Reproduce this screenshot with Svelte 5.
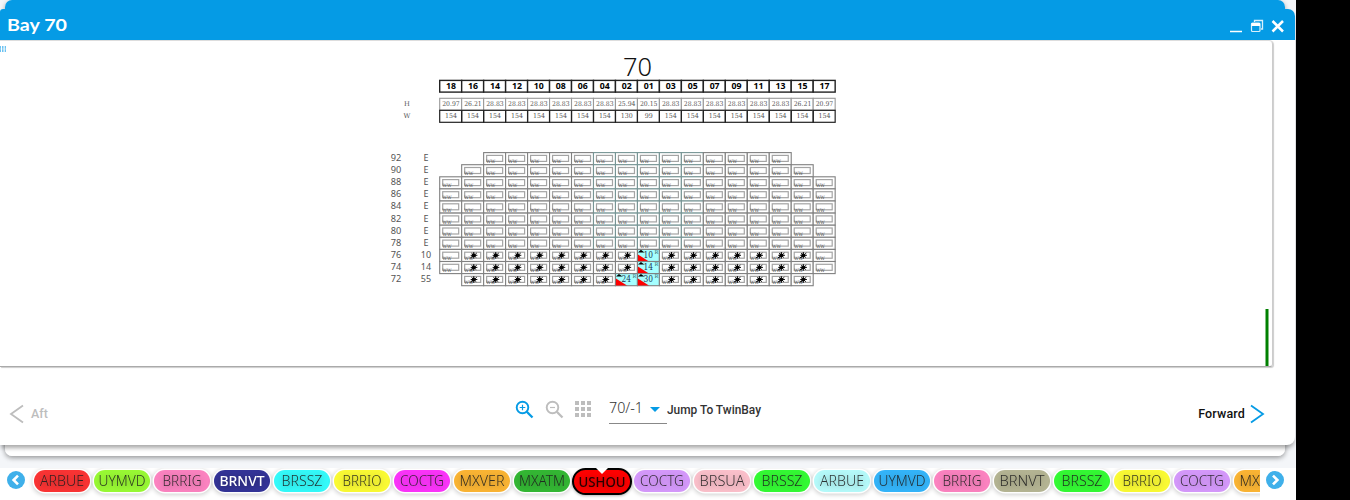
<script>
  const pitch = 21.97;
  const left = 439.7;
  const bays = ['18','16','14','12','10','08','06','04','02','01','03','05','07','09','11','13','15','17'];
  const heights = bays.map((b) => ({ 18: '20.97', 17: '20.97', 16: '26.21', 15: '26.21', '02': '25.94', '01': '20.15' })[b] ?? '28.83');
  const weights = bays.map((b) => ({ '02': '130', '01': '99' })[b] ?? '154');
  const tiers = [
    ['92', 'E', 2, 15], ['90', 'E', 1, 16], ['88', 'E', 0, 17], ['86', 'E', 0, 17],
    ['84', 'E', 0, 17], ['82', 'E', 0, 17], ['80', 'E', 0, 17], ['78', 'E', 0, 17],
    ['76', '10', 0, 17], ['74', '14', 0, 17], ['72', '55', 1, 16]
  ];
  const loaded = { '8-9': '10', '9-9': '14', '10-9': '30', '10-8': '24' };
  const cells = tiers.flatMap(([, , a, b], r) =>
    Array.from({ length: b - a + 1 }, (_, i) => {
      const c = a + i;
      return { x: left + c * pitch, y: 152.6 + r * 12.1, load: loaded[`${r}-${c}`], star: r > 7 && c > 0 && c < 17, tone: c > 6 && c < 12 && r < 8 };
    })
  );
  const ports = [
    ['ARBUE', '#fa3434', 44], ['UYMVD', '#99fa34', 47], ['BRRIG', '#fb83c0', 39], ['BRNVT', '#343498', 45, 'light'],
    ['BRSSZ', '#34fafa', 41], ['BRRIO', '#fafa34', 39], ['COCTG', '#fb34fa', 44], ['MXVER', '#fbb534', 45],
    ['MXATM', '#34b834', 46], ['USHOU', '#ff0000', 47, 'active'], ['COCTG', '#d599fb', 44], ['BRSUA', '#fbc0cb', 45],
    ['BRSSZ', '#34fa34', 41], ['ARBUE', '#b5fafa', 44], ['UYMVD', '#34b5fa', 47], ['BRRIG', '#fb83c0', 39],
    ['BRNVT', '#b5b594', 45], ['BRSSZ', '#34fa34', 41], ['BRRIO', '#fafa34', 39], ['COCTG', '#d599fb', 44], ['MXVER', '#fbb534', 45]
  ];
</script>

<div class="screen">
  <div class="app">
    <div class="stack">
      <div class="back"></div>
      <section class="window">
        <header>
          <h1><svg width="62" height="22"><text x="0" y="16" textLength="60" lengthAdjust="spacingAndGlyphs">Bay 70</text></svg></h1>
          <svg class="winbtns" width="60" height="18" fill="none" stroke="#fff">
            <path d="M2 14.5H14" stroke-width="1.4" />
            <path d="M26.5 5V3.5H34.5V12H33" stroke-width="1.3" stroke="#d9f0fc" />
            <rect x="23.5" y="6" width="8.5" height="8.5" rx="1" stroke-width="1.2" stroke="#d9f0fc" />
            <path d="M23.5 7.5H32" stroke-width="3" />
            <path d="M44.5 4L55 14.5M55 4L44.5 14.5" stroke-width="2.5" />
          </svg>
        </header>
        <div class="plan">
          <svg width="1272" height="325" viewBox="0 41 1272 325">
            <defs>
              <g id="slot">
                <rect x="3" y="2.8" width="16" height="6" fill="none" stroke="#a4a4a4" stroke-width="1.2" />
                <text class="ww" x="2.7" y="10.5" textLength="9" lengthAdjust="spacingAndGlyphs">WW</text>
              </g>
              <g id="star" stroke="#000">
                <path d="M8.7 8.6L12 5.8M9.8 3.8L14.6 8.1M15.1 3.6L10 8.2M12.1 2.6V9.2M9 5.9H15.7" stroke-width=".95" />
                <circle cx="12.1" cy="5.9" r="1.5" />
              </g>
            </defs>
            <g fill="#6cc2f1"><rect x="0" y="46" width="1" height="6" /><rect x="2" y="46" width="1.5" height="6" /><rect x="4.7" y="46" width="1.3" height="6" /></g>
            <path d="M0 49H6" stroke="#fff" stroke-width=".4" />
            <text class="title" x="623" y="76" textLength="29" lengthAdjust="spacingAndGlyphs">70</text>
            {#each bays as b, i}
              {@const x = left + i * pitch}
              <rect {x} y="80.4" width={pitch} height="11.7" class="head" />
              <text x={x + pitch / 2 + 0.3} y="89.2" class="num" textLength="10" lengthAdjust="spacingAndGlyphs">{b}</text>
              <rect {x} y="98.3" width={pitch} height="12" class="hbox" />
              <text x={x + pitch / 2 + 0.3} y="106.2" class="val" textLength="17.6" lengthAdjust="spacingAndGlyphs">{heights[i]}</text>
              <rect {x} y="110.3" width={pitch} height="12" class="wbox" />
              <text x={x + pitch / 2 + 0.4} y="118.2" class="val" textLength={weights[i].length * 4} lengthAdjust="spacingAndGlyphs">{weights[i]}</text>
            {/each}
            <text x="407" y="106" class="val">H</text>
            <text x="407" y="118" class="val">W</text>
            {#each tiers as t, r}
              <text x="396" y={161 + r * 12.1} class="tier" textLength="10.5" lengthAdjust="spacingAndGlyphs">{t[0]}</text>
              <text x="426" y={161 + r * 12.1} class="tier">{t[1]}</text>
            {/each}
            {#each cells as c}
              <g transform="translate({c.x} {c.y})">
                <rect width={pitch} height="12.1" fill={c.load ? '#a5ffff' : '#fff'} stroke={c.tone ? '#779595' : '#808080'} stroke-width="1.1" />
                {#if c.load}
                  <path d="M.5 5L11.5 12H.5Z" fill="#f00" />
                  <path d="M.5 3L3.5 .4L7 3Z" fill="#000" />
                  <text x="6" y="8.2" class="load" textLength="9.5" lengthAdjust="spacingAndGlyphs">{c.load}</text>
                  <text x="17" y="4.8" class="reefer">R</text>
                {:else}
                  <use href="#slot" />
                  {#if c.star}<use href="#star" />{/if}
                {/if}
              </g>
            {/each}
            <rect x="1265.5" y="309" width="3" height="57" fill="#008000" />
          </svg>
        </div>
        <footer>
          <div class="nav aft">
            <svg width="16" height="20" fill="none" stroke="#bdbdbd" stroke-width="1.8"><path d="M14 1.5L2 10L14 18.5" /></svg>
            <span>Aft</span>
          </div>
          <div class="tools">
            <svg width="20" height="20" fill="none" stroke="#059be5" stroke-width="1.9"><circle cx="7.5" cy="7.5" r="5.8" /><path d="M11.8 11.8L17.5 17.5" stroke-width="2.3" /><path d="M4.7 7.5H10.3M7.5 4.7V10.3" stroke-width="1.2" /></svg>
            <svg width="20" height="20" fill="none" stroke="#bdbdbd" stroke-width="1.9"><circle cx="7.5" cy="7.5" r="5.8" /><path d="M11.8 11.8L17.5 17.5" stroke-width="2.3" /><path d="M5 7.5H10" stroke-width="1.2" /></svg>
            <svg width="18" height="20" fill="#bdbdbd">
              {#each [0, 1, 2] as y}{#each [0, 1, 2] as x}<rect x={x * 6} y={1 + y * 6} width="4" height="4" />{/each}{/each}
            </svg>
            <div class="select">
              <svg width="38" height="22"><text x="0" y="14" textLength="34" lengthAdjust="spacingAndGlyphs">70/-1</text></svg>
              <i></i>
            </div>
            <svg class="jump" width="98" height="20"><text x="0" y="14" textLength="94" lengthAdjust="spacingAndGlyphs">Jump To TwinBay</text></svg>
          </div>
          <div class="nav fwd">
            <span>Forward</span>
            <svg width="16" height="20" fill="none" stroke="#059be5" stroke-width="1.8"><path d="M2 1.5L14 10L2 18.5" /></svg>
          </div>
        </footer>
      </section>
    </div>
    <div class="ports">
      <svg class="arrow" width="18" height="18"><circle cx="9" cy="9" r="9" fill="#3fb0ea" /><path d="M11 4.6L6.6 9L11 13.4" fill="none" stroke="#fff" stroke-width="2.6" /></svg>
      <div class="rail">
        {#each ports as [name, color, w, kind]}
          <div class="slot">
            <div class="chip {kind ?? ''}" style="background-color:{color}">
              <svg width="56" height="22"><text x="28" y={kind === 'active' ? 16.8 : 16.4} textLength={w} lengthAdjust="spacingAndGlyphs">{name}</text></svg>
              {#if kind === 'active'}<b></b>{/if}
            </div>
          </div>
        {/each}
      </div>
      <svg class="arrow right" width="18" height="18"><circle cx="9" cy="9" r="9" fill="#3fb0ea" /><path d="M7 4.6L11.4 9L7 13.4" fill="none" stroke="#fff" stroke-width="2.6" /></svg>
    </div>
  </div>
</div>

<style>
  :global(body) { margin: 0; overflow: hidden; }
  .screen { width: 1350px; height: 500px; background: #000; overflow: hidden; font-family: Roboto, sans-serif; }
  .app { width: 1296px; height: 500px; display: flex; flex-direction: column; background: #fff; overflow: hidden; }
  svg { display: block; flex: none; }
  .stack { height: 468px; flex: none; display: grid; background: #f4f6f9; }
  .back, .window { grid-area: 1 / 1; }
  .back { margin: 0 11px 12px 5px; border-radius: 7px; background: linear-gradient(#059be5 0 40px, #fff 40px); box-shadow: 0 2px 5px rgba(0, 0, 0, .38); }
  .window { z-index: 1; margin: 9px 1px 23px 0; border-radius: 3px 7px 8px 0; background: #fff; display: flex; flex-direction: column; overflow: hidden; box-shadow: 0 4px 4px -1px rgba(0, 0, 0, .34); }
  header { height: 31px; flex: none; background: #059be5; display: flex; justify-content: space-between; padding: 0 11px 0 7px; box-sizing: border-box; }
  h1 { margin: 6px 0 0; }
  h1 text { font: 700 17px Lato, sans-serif; fill: #fff; }
  .winbtns { margin-top: 8px; margin-right: -4px; }
  .plan { width: 1272px; height: 325px; flex: none; border-top: 1px solid #ddd; border-right: 1px solid #ccc; border-bottom: 1px solid #aaa; border-radius: 0 4px 3px 0; box-shadow: 1px 1px 1px rgba(0, 0, 0, .2); }
  .title { font: 300 25px "Noto Sans", sans-serif; fill: #111; }
  .head { fill: #fff; stroke: #222; stroke-width: 1.4; }
  .hbox { fill: #fff; stroke: #999; stroke-width: 1.1; }
  .wbox { fill: none; stroke: #222; stroke-width: 1.2; }
  .num { font: 700 9px "Noto Sans", sans-serif; text-anchor: middle; }
  .val { font: 6.7px "DejaVu Serif", serif; text-anchor: middle; fill: #555; }
  .tier { font: 9px "Noto Sans", sans-serif; text-anchor: middle; fill: #555; }
  .ww { font: 4.5px "DejaVu Serif", serif; fill: #444; }
  .load { font: 8.5px "DejaVu Serif", serif; fill: #235; }
  .reefer { font: 5px "DejaVu Serif", serif; fill: #366; }
  footer { flex: 1; display: flex; align-items: flex-start; padding: 0 30px 0 9px; font: 500 12px Roboto, sans-serif; }
  .nav { display: flex; align-items: center; margin-top: 37px; }
  .nav span { position: relative; top: -1px; }
  .aft { width: 100px; gap: 6px; color: #bdbdbd; font-size: 12.5px; }
  .fwd { margin-left: auto; gap: 4px; font-size: 12.5px; color: #111; letter-spacing: .15px; }
  .tools { display: flex; align-items: flex-start; margin-left: 406px; margin-top: 33px; gap: 10px; }
  .select { width: 58px; height: 23px; margin-left: 6px; border-bottom: 1px solid #888; display: flex; gap: 3px; margin-top: 0; }
  .select text { font: 300 14.5px "Noto Sans", sans-serif; fill: #333; }
  .select svg { margin-top: -1px; }
  .select i { width: 0; height: 0; margin-top: 7px; border: 5px solid transparent; border-top-color: #059be5; border-bottom: 0; }
  .jump { margin-left: -10px; }
  .jump text { font: 500 12px Roboto, sans-serif; fill: #333; }
  .ports { height: 32px; display: flex; background: #fff; padding-left: 7px; }
  .arrow { margin-top: 3px; }
  .right { margin-left: 6px; }
  .rail { width: 1235px; padding-left: 7px; box-sizing: border-box; display: flex; overflow: hidden; }
  .slot { width: 60px; flex: none; display: flex; justify-content: center; align-items: flex-start; }
  .chip { width: 56px; height: 22px; margin-top: 2px; border-radius: 12px; box-shadow: 0 0 0 1.5px #fff, 0 1px 4px 2px rgba(0, 0, 0, .18); }
  .chip svg { filter: drop-shadow(0 1px 3px rgba(0, 0, 0, .4)); }
  .chip text { font: 300 14px "Noto Sans", sans-serif; text-anchor: middle; fill: rgba(30, 30, 30, .9); }
  .chip.light text { fill: #fff; font-weight: 500; }
  .chip.active { position: relative; height: 23px; border: 2px solid #000; margin-top: 0; box-shadow: 0 1px 3px rgba(0, 0, 0, .3); border-radius: 14px; }
  .chip.active text { font-weight: 500; fill: #280000; }
  .active b { position: absolute; left: 22px; top: -2px; border: 6px solid transparent; border-top: 6px solid #fff; border-bottom: 0; }
</style>
